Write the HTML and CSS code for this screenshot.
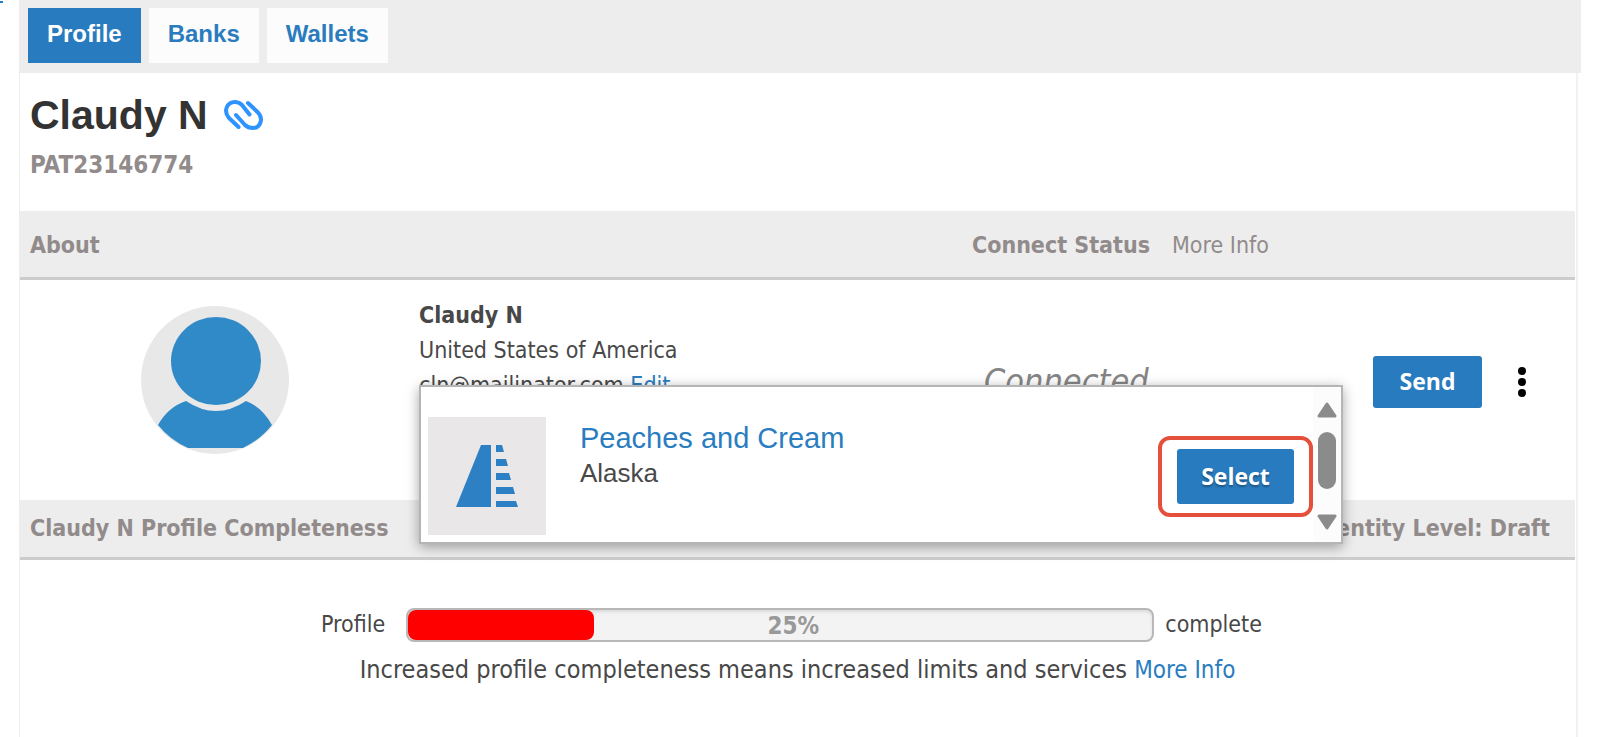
FILE: index.html
```
<!DOCTYPE html>
<html lang="en">

<head>
    <meta charset="UTF-8">
    <meta name="viewport" content="width=device-width, initial-scale=1.0">
    <title>Claudy N</title>
    <link rel="stylesheet" href="styles.css">
</head>

<body>
    <div class="page">
        <aside class="side"><span class="side-mark"></span></aside>
        <main class="main">
            <nav class="tabs">
                <button type="button" class="tab tab-active">Profile</button>
                <button type="button" class="tab">Banks</button>
                <button type="button" class="tab">Wallets</button>
            </nav>
            <div class="panel">
                <div class="profile-head">
                    <h1>Claudy N
                        <svg class="clip" viewBox="0 0 40 30" fill="none" stroke="#2e93ff" stroke-width="4" stroke-linecap="round" stroke-linejoin="round">
                            <path d="M14.500 27L5 18C-1 11 3 2 11 2C14.500 2 16.500 3.500 18 5L25.500 14.500" />
                            <path d="M24 3L34 12.500C40 19 36 28 29 28C25 28 22.500 26.500 21 25L12 15" />
                        </svg>
                    </h1>
                    <p class="profile-id">PAT23146774</p>
                </div>

                <div class="section-bar about-bar">
                    <h2 class="about-title">About</h2>
                    <div class="status-head"><h2>Connect Status</h2><a href="#" class="muted-link">More Info</a></div>
                </div>
                <div class="about">
                    <div class="about-photo">
                        <svg class="avatar" viewBox="0 0 148 148">
                            <circle cx="74" cy="74" r="74" fill="#e8e8e8" />
                            <ellipse cx="75" cy="55" rx="45" ry="44" fill="#308ac8" />
                            <path d="M45 95Q75 115 105 95Q121 101 131 119Q119 134 102 142H47Q29 134 17 119Q27 101 45 95Z" fill="#308ac8" />
                        </svg>
                    </div>
                    <div class="about-info">
                        <p class="info-name">Claudy N</p>
                        <p>United States of America</p>
                        <p>cln@mailinator.com <a href="#">Edit</a></p>
                        <div class="popup">
                            <div class="popup-item">
                                <svg class="popup-logo" viewBox="0 0 118 118">
                                    <rect width="118" height="118" fill="#e9e7e8" />
                                    <g fill="#2d80c3">
                                        <path d="M53 28H63V90H28Z" />
                                        <path d="M68 28H74L76 35H68Z" />
                                        <path d="M68 42H78L80 49H68Z" />
                                        <path d="M68 56H81L83 63H68Z" />
                                        <path d="M68 70H85L87 77H68Z" />
                                        <path d="M68 84H88L90 90H68Z" />
                                    </g>
                                </svg>
                                <div class="popup-text">
                                    <a href="#" class="popup-name">Peaches and Cream</a>
                                    <span class="popup-place">Alaska</span>
                                </div>
                                <div class="highlight"><button type="button" class="btn btn-select">Select</button></div>
                            </div>
                            <div class="scrollbar">
                                <svg class="arrow" viewBox="0 0 20 16"><path d="M10 2L18 14H2Z" /></svg>
                                <span class="thumb"></span>
                                <svg class="arrow arrow-down" viewBox="0 0 20 16"><path d="M10 14L18 2H2Z" /></svg>
                            </div>
                        </div>
                    </div>
                    <p class="status">Connected</p>
                    <div class="actions">
                        <button type="button" class="btn btn-send">Send</button>
                        <button type="button" class="more" aria-label="More">
                            <svg viewBox="0 0 8 32"><circle cx="4" cy="5" r="4" /><circle cx="4" cy="16" r="4" /><circle cx="4" cy="27" r="4" /></svg>
                        </button>
                    </div>
                </div>

                <div class="section-bar level-bar">
                    <h2>Claudy N Profile Completeness</h2>
                    <h2>Identity Level: Draft</h2>
                </div>
                <div class="complete">
                    <div class="meter-row">
                        <span>Profile</span>
                        <div class="meter">
                            <div class="meter-fill" style="width: 25%"></div>
                            <span class="meter-text">25%</span>
                        </div>
                        <span>complete</span>
                    </div>
                    <p class="hint">Increased profile completeness means increased limits and services <a href="#" class="hint-link">More Info</a></p>
                </div>
            </div>
        </main>
    </div>
</body>

</html>
```
FILE: styles.css
```
* {
    box-sizing: border-box;
    margin: 0;
    padding: 0;
}

body {
    background: #fff;
    color: #484848;
    font-family: "DejaVu Sans Condensed", "Noto Sans", sans-serif;
    font-size: 23px;
    line-height: 35px;
}

a {
    color: #2a7dc0;
    text-decoration: none;
}

button {
    border: 0;
    cursor: pointer;
}

h2 {
    font-size: 23px;
    font-weight: bold;
}

.page {
    display: flex;
    min-height: 100vh;
}

.side {
    width: 19px;
    padding-top: 1px;
}

.side-mark {
    display: block;
    width: 3px;
    height: 2px;
    background: #2a7dc0;
}

.main {
    flex: 1;
    display: flex;
    flex-direction: column;
    padding-right: 36px;
}

.tabs {
    display: flex;
    gap: 8px;
    padding: 8px 9px 10px;
    background: #ededed;
}

.tab {
    height: 55px;
    padding: 0 19px 3px;
    background: #fcfcfc;
    color: #2a7cbf;
    font: bold 24px "Liberation Sans", Arial, sans-serif;
}

.tab-active {
    background: #287bbe;
    color: #fff;
}

.panel {
    flex: 1;
    margin-right: 3px;
    padding-right: 1px;
    border-left: 1px solid #eee;
    border-right: 2px solid #f2f2f2;
}

.profile-head {
    height: 138px;
    padding: 18px 10px;
}

h1 {
    display: flex;
    align-items: center;
    gap: 16px;
    color: #333;
    font: bold 41px/48px "Liberation Sans", Arial, sans-serif;
}

.clip {
    width: 40px;
    height: 30px;
}

.profile-id {
    padding-top: 9px;
    color: #928b8b;
    font-size: 24px;
    font-weight: bold;
}

.section-bar {
    display: flex;
    align-items: center;
    background: #ededed;
    border-bottom: 3px solid #ccc;
    color: #928b8b;
}

.about-bar,
.about {
    display: grid;
    grid-template-columns: 399fr 553fr 401fr 202fr;
}

.about-bar {
    height: 69px;
    padding-top: 2px;
}

.about-title {
    grid-column: 1 / 3;
    padding-left: 10px;
}

.status-head {
    display: flex;
    gap: 22px;
    white-space: nowrap;
}

.muted-link {
    color: #928b8b;
}

.about {
    height: 220px;
}

.about-photo {
    padding: 26px 0 0 121px;
}

.avatar {
    display: block;
    width: 148px;
    height: 148px;
}

.about-info {
    position: relative;
    padding-top: 18px;
}

.info-name {
    font-weight: bold;
}

.status {
    padding: 84px 0 0 12px;
    color: #858585;
    font-size: 34px;
    font-style: italic;
}

.actions {
    display: flex;
    align-items: flex-start;
    gap: 36px;
    padding-top: 76px;
}

.btn {
    padding-bottom: 2px;
    border-radius: 3px;
    background: #287bbe;
    color: #fff;
    font: bold 23px "Open Sans", sans-serif;
}

.btn-send {
    width: 109px;
    height: 52px;
}

.more {
    height: 52px;
    background: none;
}

.more svg {
    display: block;
    width: 8px;
    height: 32px;
}

/* company picker, lies over the about block */
.popup {
    position: absolute;
    z-index: 2;
    top: 105px;
    left: 0;
    display: flex;
    width: 924px;
    height: 159px;
    border: 2px solid #b5b5b5;
    background: #fff;
    box-shadow: 0 3px 12px rgba(0, 0, 0, 0.35);
}

.popup-item {
    flex: 1;
    display: flex;
    align-items: center;
    padding-left: 7px;
}

.popup-logo {
    width: 118px;
    height: 118px;
    margin-top: 22px;
}

.popup-text {
    flex: 1;
    display: flex;
    flex-direction: column;
    padding: 0 0 18px 34px;
    font-family: "Liberation Sans", Arial, sans-serif;
}

.popup-name {
    font-size: 29px;
}

.popup-place {
    font-size: 26px;
}

.highlight {
    margin-top: 24px;
    padding: 9px 15px;
    border: 4px solid #e5503c;
    border-radius: 12px;
}

.btn-select {
    display: block;
    width: 117px;
    height: 55px;
    text-shadow: 0 2px 2px rgba(0, 0, 0, 0.3);
}

.scrollbar {
    display: flex;
    flex-direction: column;
    align-items: center;
    width: 28px;
    padding: 15px 0 12px;
    background: #fcfcfc;
}

.arrow {
    width: 20px;
    height: 16px;
    fill: #8b8b8b;
    stroke: #8b8b8b;
    stroke-width: 3;
    stroke-linejoin: round;
}

.thumb {
    width: 18px;
    height: 57px;
    margin-top: 14px;
    border-radius: 9px;
    background: #8b8b8b;
}

.arrow-down {
    margin-top: auto;
}

.level-bar {
    justify-content: space-between;
    height: 60px;
    padding: 0 25px 0 10px;
}

.complete {
    padding: 47px 0 40px;
}

.meter-row {
    display: flex;
    align-items: center;
    justify-content: center;
    padding-right: 12px;
}

.meter {
    position: relative;
    width: 748px;
    height: 34px;
    margin: 0 11px 0 21px;
    border: 2px solid #b8b8b8;
    border-radius: 8px;
    background: #f3f3f3;
    box-shadow: inset 0 2px 3px rgba(0, 0, 0, 0.1);
}

.meter-fill {
    height: 100%;
    border-radius: 8px;
    background: #f00;
}

.meter-text {
    position: absolute;
    inset: 0;
    padding-left: 26px;
    color: #999;
    font-size: 24px;
    font-weight: bold;
    line-height: 32px;
    text-align: center;
}

.hint {
    padding-top: 10px;
    font-size: 25px;
    text-align: center;
}

.hint-link {
    font-size: 24px;
}
```
